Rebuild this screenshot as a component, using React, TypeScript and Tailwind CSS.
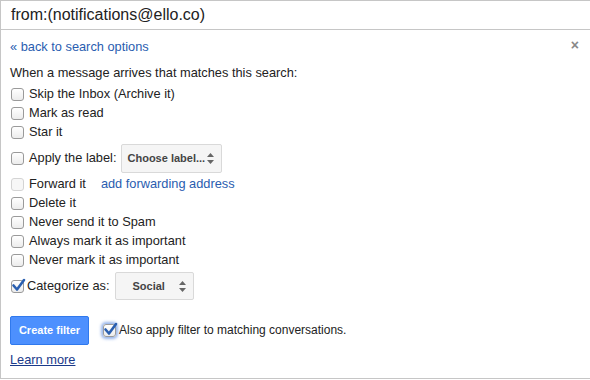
import React from "react";

const Box = ({ checked = false, faded = false, glow = false }: { checked?: boolean; faded?: boolean; glow?: boolean }) => (
  <span
    className={`relative inline-block w-[13px] h-[13px] rounded-[3px] border shrink-0 ${
      faded ? "border-[#d4d4d4] bg-[#f7f7f7]" : "border-[#9a9a9a] bg-gradient-to-b from-white to-[#ececec]"
    } ${glow ? "shadow-[0_0_3px_2px_rgba(80,130,220,0.6)]" : ""}`}
  >
    {checked && (
      <svg className="absolute left-[-1px] top-[-3px]" width="15" height="15" viewBox="0 0 15 15">
        <path d="M2.5 7.5 L6 11.5 L13 2" fill="none" stroke="#2a5fb0" strokeWidth="2.6" strokeLinecap="round" strokeLinejoin="round" />
      </svg>
    )}
  </span>
);

const Arrows = () => (
  <svg width="7" height="11" viewBox="0 0 7 11" className="shrink-0">
    <path d="M3.5 0 L7 4 L0 4 Z" fill="#666" />
    <path d="M3.5 11 L7 7 L0 7 Z" fill="#666" />
  </svg>
);

const Row = ({ label, children, className = "" }: { label: string; children?: React.ReactNode; className?: string }) => (
  <div className={`flex items-center h-[19px] ${className}`}>
    <span className="ml-[1px] mr-[5px] flex"><Box /></span>
    <span>{label}</span>
    {children}
  </div>
);

export default function App() {
  return (
    <div className="w-[590px] h-[380px] bg-white text-[#222] text-[12.8px] leading-none" style={{ fontFamily: '"Liberation Sans", Arial, sans-serif' }}>
      <div className="h-[30px] border-t border-b border-l border-[#c6c6c6] flex items-center pl-[10px] text-[16px] text-[#222]">
        from:(notifications@ello.co)
      </div>
      <div className="h-[349px] border-l border-b border-[#c6c6c6] pl-[9px] pr-[12px] relative">
        <div className="flex justify-between items-center pt-[6px] h-[29px]">
          <span className="text-[#2a5db0]">« back to search options</span>
          <span className="text-[#888] text-[14px] font-bold mr-[-1px] mt-[-6px]">×</span>
        </div>
        <div className="pt-[8px] pb-[5px]">When a message arrives that matches this search:</div>
        <div className="flex flex-col">
          <Row label="Skip the Inbox (Archive it)" />
          <Row label="Mark as read" />
          <Row label="Star it" />
          <div className="flex items-center h-[33px]">
            <span className="ml-[1px] mr-[5px] flex"><Box /></span>
            <span>Apply the label:</span>
            <span className="ml-[4px] h-[29px] w-[101px] border border-[#d9d9d9] rounded-[2px] bg-[#f5f5f5] flex items-center justify-between pl-[6px] pr-[7px] text-[11px] font-bold text-[#444]">
              <span>Choose label...</span>
              <Arrows />
            </span>
          </div>
          <div className="flex items-center h-[19px]">
            <span className="ml-[1px] mr-[5px] flex"><Box faded /></span>
            <span>Forward it</span>
            <span className="ml-[15px] text-[#2a5db0]">add forwarding address</span>
          </div>
          <Row label="Delete it" />
          <Row label="Never send it to Spam" />
          <Row label="Always mark it as important" />
          <Row label="Never mark it as important" />
          <div className="flex items-center h-[33px]">
            <span className="ml-[1px] mr-[3px] flex"><Box checked /></span>
            <span>Categorize as:</span>
            <span className="ml-[5px] h-[28px] w-[79px] border border-[#d9d9d9] rounded-[2px] bg-[#f5f5f5] flex items-center justify-between pl-[17px] pr-[7px] text-[11px] font-bold text-[#444]">
              <span>Social</span>
              <Arrows />
            </span>
          </div>
        </div>
        <div className="flex items-center mt-[13px]">
          <button className="w-[79px] h-[29px] rounded-[2px] bg-[#4d90fe] border border-[#3079ed] text-white text-[11px] font-bold">
            Create filter
          </button>
          <span className="ml-[14px] mr-[3px] flex"><Box checked glow /></span>
          <span className="text-[12px]">Also apply filter to matching conversations.</span>
        </div>
        <div className="mt-[9px]">
          <span className="text-[#1a3a8a] underline">Learn more</span>
        </div>
      </div>
    </div>
  );
}
